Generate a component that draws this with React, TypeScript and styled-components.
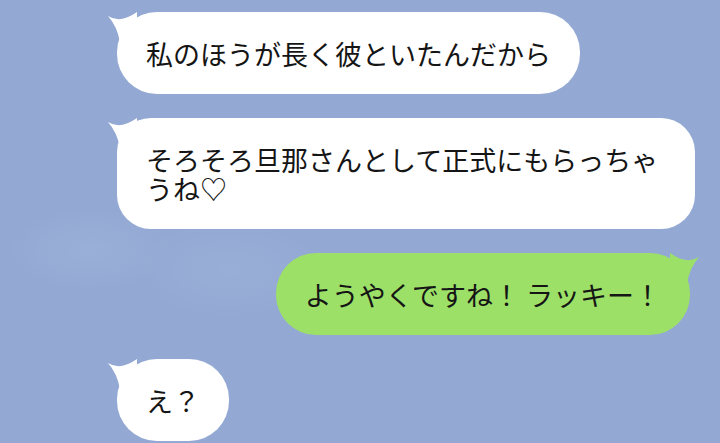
import React from "react";
import styled, { createGlobalStyle } from "styled-components";

const GlobalStyle = createGlobalStyle`
  html, body {
    margin: 0;
    padding: 0;
    background: #93a9d4;
  }
  body {
    font-family: "Noto Sans CJK JP", "Noto Sans", sans-serif;
  }
`;

const Screen = styled.div`
  width: 720px;
  height: 443px;
  overflow: hidden;
  box-sizing: border-box;
  padding-top: 12px;
  display: flex;
  flex-direction: column;
  gap: 24px;
  background:
    radial-gradient(ellipse 120px 60px at 90px 250px, rgba(255, 255, 255, 0.07), transparent 70%),
    radial-gradient(ellipse 140px 70px at 230px 270px, rgba(255, 255, 255, 0.06), transparent 70%),
    #93a9d4;
`;

const Row = styled.div<{ $side: "left" | "right" }>`
  display: flex;
  justify-content: ${(p) => (p.$side === "left" ? "flex-start" : "flex-end")};
  padding-left: ${(p) => (p.$side === "left" ? "117px" : "0")};
  padding-right: ${(p) => (p.$side === "right" ? "30px" : "0")};
`;

const Bubble = styled.div<{ $mine?: boolean; $radius: number }>`
  position: relative;
  box-sizing: border-box;
  max-width: 578px;
  padding: 27px 29px 26px 29px;
  border-radius: ${(p) => p.$radius}px;
  background: ${(p) => (p.$mine ? "#9ce068" : "#ffffff")};
  color: #151515;
  font-size: 27px;
  line-height: 29px;
  letter-spacing: 0;
  white-space: normal;
  word-break: break-all;
`;

const Tail = styled.svg<{ $mine?: boolean }>`
  position: absolute;
  top: 0;
  width: 32px;
  height: 32px;
  overflow: visible;
  ${(p) => (p.$mine ? "right: -10px; transform: scaleX(-1);" : "left: -10px;")}
`;

const BubbleTail: React.FC<{ mine?: boolean }> = ({ mine }) => (
  <Tail $mine={mine} viewBox="0 0 32 32">
    <path
      d="M1 4 Q 13 12 30 0 L 30 30 L 13 30 Q 10 14 1 4 Z"
      fill={mine ? "#9ce068" : "#ffffff"}
    />
  </Tail>
);

type Msg = { text: string; mine?: boolean; radius: number };

const messages: Msg[] = [
  { text: "私のほうが長く彼といたんだから", radius: 40 },
  { text: "そろそろ旦那さんとして正式にもらっちゃうね♡", radius: 34 },
  { text: "ようやくですね！ ラッキー！", mine: true, radius: 40 },
  { text: "え？", radius: 40 },
];

export default function App() {
  return (
    <>
      <GlobalStyle />
      <Screen>
        {messages.map((m, i) => (
          <Row key={i} $side={m.mine ? "right" : "left"}>
            <Bubble $mine={m.mine} $radius={m.radius}>
              <BubbleTail mine={m.mine} />
              {m.text}
            </Bubble>
          </Row>
        ))}
      </Screen>
    </>
  );
}
